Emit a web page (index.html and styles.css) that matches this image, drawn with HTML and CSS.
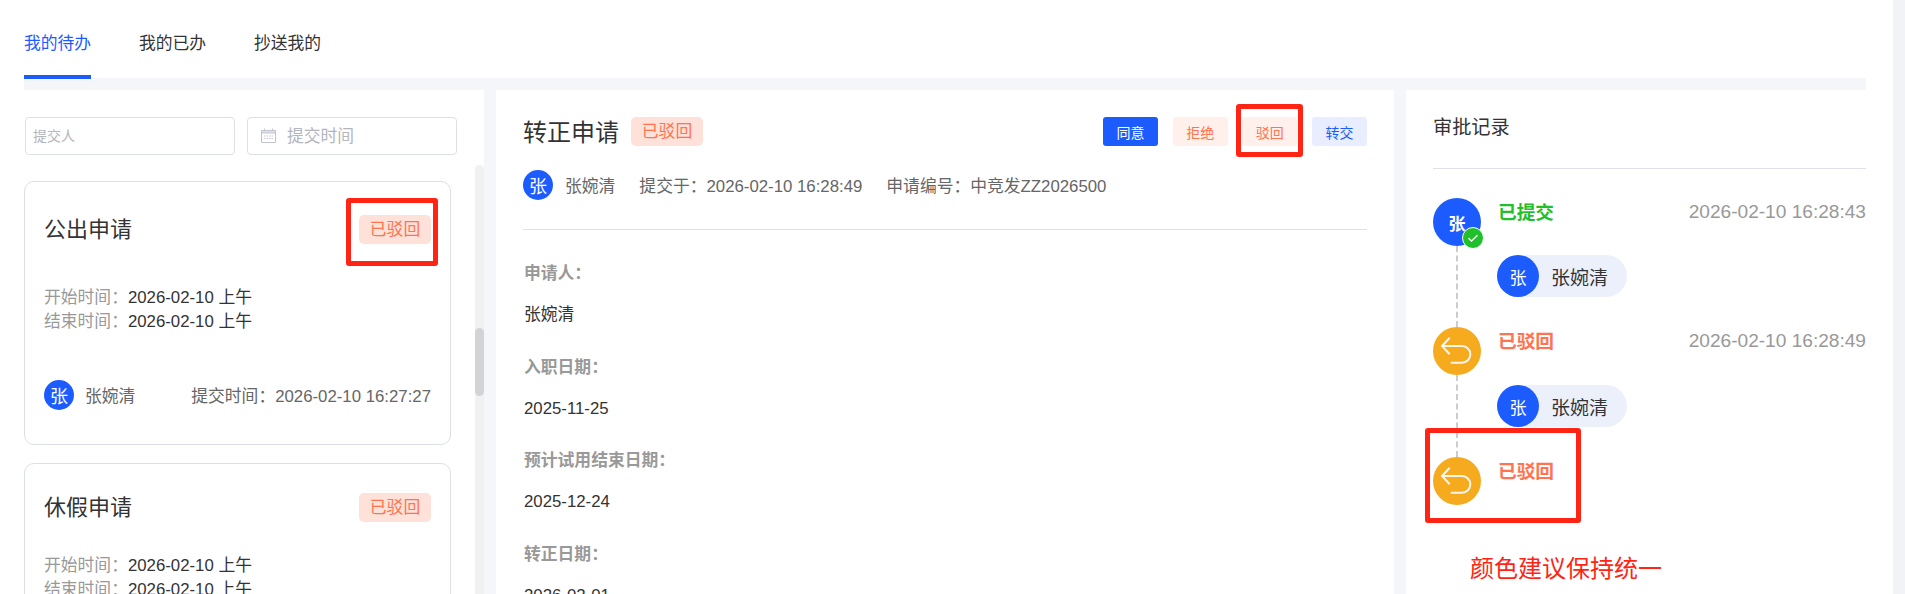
FILE: index.html
```html
<!DOCTYPE html>
<html lang="zh-CN">
<head>
<meta charset="utf-8">
<title>我的待办</title>
<link rel="stylesheet" href="styles.css">
</head>
<body>
<div class="page">
  <main class="main">
    <nav class="tabs">
      <a class="tab active">我的待办</a>
      <a class="tab">我的已办</a>
      <a class="tab">抄送我的</a>
    </nav>
    <div class="board">
      <section class="list-panel">
        <div class="filters">
          <div class="input small">提交人</div>
          <div class="input">
            <svg class="cal" viewBox="0 0 15 15" width="15" height="15"><path d="M.5 2.500h14v12H.5z" fill="none" stroke="#c0c4cc"/><path d="M.5 2.500h14v2.500H.5z" fill="#dfe1e6" stroke="#c0c4cc"/><path d="M3.500.5v2M11.500.5v2" stroke="#c0c4cc"/><path d="M3 7.500h1.500v1H3zM5.500 7.500H7v1H5.500zM8 7.500h1.500v1H8zM10.500 7.500H12v1h-1.500zM3 10h1.500v1H3zM5.500 10H7v1H5.500zM8 10h1.500v1H8zM10.500 10H12v1h-1.500z" fill="#c9ccd3"/></svg>
            <span>提交时间</span>
          </div>
        </div>
        <div class="scroll-row">
          <div class="cards">
            <article class="card">
              <div class="card-head"><h3>公出申请</h3><span class="tag">已驳回</span></div>
              <p class="line first"><span class="k">开始时间：</span>2026-02-10 上午</p>
              <p class="line"><span class="k">结束时间：</span>2026-02-10 上午</p>
              <div class="card-foot">
                <span class="avatar a30">张</span><span class="who">张婉清</span>
                <span class="submitted">提交时间：2026-02-10 16:27:27</span>
              </div>
            </article>
            <article class="card compact">
              <div class="card-head"><h3>休假申请</h3><span class="tag">已驳回</span></div>
              <p class="line first"><span class="k">开始时间：</span>2026-02-10 上午</p>
              <p class="line"><span class="k">结束时间：</span>2026-02-10 上午</p>
            </article>
          </div>
          <div class="scrollbar"><div class="thumb"></div></div>
        </div>
      </section>

      <section class="detail-panel">
        <div class="detail-head">
          <div class="title-row">
            <h2>转正申请</h2><span class="tag">已驳回</span>
            <div class="actions">
              <button class="btn primary">同意</button>
              <button class="btn danger">拒绝</button>
              <button class="btn danger">驳回</button>
              <button class="btn soft">转交</button>
            </div>
          </div>
          <div class="meta">
            <span class="avatar a30">张</span><span class="who">张婉清</span>
            <span class="meta-item">提交于：2026-02-10 16:28:49</span>
            <span class="meta-item">申请编号：中竞发ZZ2026500</span>
          </div>
        </div>
        <dl class="fields">
          <dt>申请人：</dt><dd>张婉清</dd>
          <dt>入职日期：</dt><dd>2025-11-25</dd>
          <dt>预计试用结束日期：</dt><dd>2025-12-24</dd>
          <dt>转正日期：</dt><dd>2026-02-01</dd>
        </dl>
      </section>

      <section class="record-panel">
        <h4>审批记录</h4>
        <div class="timeline">
          <div class="step">
            <div class="node blue">张
              <span class="check"><svg viewBox="0 0 12 12" width="12" height="12"><path d="M1.500 6.300 4.500 9 10.500 3.300" fill="none" stroke="#fff" stroke-width="1.500"/></svg></span>
            </div>
            <div class="step-body">
              <div class="step-top"><b class="green">已提交</b><time>2026-02-10 16:28:43</time></div>
              <div class="pill"><span class="avatar a42">张</span><span>张婉清</span></div>
            </div>
          </div>
          <div class="step">
            <div class="node amber">
              <svg viewBox="0 0 48 48" width="48" height="48"><path d="M16.700 10.700 9 19l7.700 8.300M9 19h20a8.350 8.350 0 0 1 0 16.700H17.700" fill="none" stroke="#fff" stroke-opacity=".9" stroke-width="2"/></svg>
            </div>
            <div class="step-body">
              <div class="step-top"><b class="orange">已驳回</b><time>2026-02-10 16:28:49</time></div>
              <div class="pill"><span class="avatar a42">张</span><span>张婉清</span></div>
            </div>
          </div>
          <div class="step last">
            <div class="node amber">
              <svg viewBox="0 0 48 48" width="48" height="48"><path d="M16.700 10.700 9 19l7.700 8.300M9 19h20a8.350 8.350 0 0 1 0 16.700H17.700" fill="none" stroke="#fff" stroke-opacity=".9" stroke-width="2"/></svg>
            </div>
            <div class="step-body">
              <div class="step-top"><b class="orange">已驳回</b></div>
            </div>
          </div>
        </div>
      </section>
    </div>
  </main>
  <div class="page-scroll"></div>
</div>
<div class="mark m1"></div>
<div class="mark m2"></div>
<div class="mark m3"></div>
<div class="note">颜色建议保持统一</div>
</body>
</html>
```
FILE: styles.css
```css
* { box-sizing: border-box; }
html, body { margin: 0; height: 594px; overflow: hidden; background: #fff; }
body {
  position: relative;
  font-family: "Liberation Sans", "Noto Sans CJK SC", sans-serif;
  color: #333;
  font-size: 16.800px;
}
.page { display: flex; height: 594px; }
.main { width: 1893px; padding-left: 24px; display: flex; flex-direction: column; overflow: hidden; }
.page-scroll { width: 12px; background: #f1f3f6; }
.tabs { display: flex; gap: 48px; height: 78px; flex: none; }
.tab { width: 67px; height: 79px; padding-top: 34px; font-size: 16.800px; line-height: 20px; color: #333; white-space: nowrap; position: relative; z-index: 1; }
.tab.active { color: #1c5cff; border-bottom: 4px solid #1c5cff; }
.board { display: flex; gap: 12px; padding-top: 12px; background: #f5f6fa; flex: 1; min-height: 0; width: 1842px; }
.list-panel { width: 460px; background: #fff; flex: none; display: flex; flex-direction: column; }
.filters { display: flex; gap: 12px; padding: 27px 0 0 1px; height: 75px; flex: none; }
.input { width: 210px; height: 38px; border: 1px solid #dcdfe6; border-radius: 4px; display: flex; align-items: center; color: #b3b6bd; font-size: 16.800px; padding: 0 0 2px 13px; gap: 11px; }
.input.small { font-size: 14px; padding-left: 7px; }
.cal { flex: none; }
.scroll-row { display: flex; flex: 1; min-height: 0; }
.cards { width: 451px; padding-top: 16px; overflow: hidden; flex: none; }
.card { width: 427px; margin-bottom: 18px; height: 264px; border: 1px solid #dcdfe6; border-radius: 10px; padding: 33px 19px 0; flex: none; }
.card.compact { padding-top: 29px; }
.card-head { display: flex; justify-content: space-between; align-items: center; height: 29px; }
h3 { margin: 0 0 6px; font-weight: 400; font-size: 22px; color: #333; }
.tag { display: inline-block; width: 72px; height: 29px; line-height: 29px; text-align: center; border-radius: 5px; background: #fee2da; color: #ff7350; font-size: 16.800px; }
.line { margin: 0; font-size: 16.800px; line-height: 24px; color: #333; }
.line.first { margin-top: 42px; }
.compact .line.first { margin-top: 32px; }
.k { color: #999; }
.card-foot { display: flex; align-items: center; margin-top: 46px; font-size: 16.800px; color: #666; }
.card-foot .who { margin-left: 11px; }
.avatar { display: inline-flex; align-items: center; justify-content: center; border-radius: 50%; background: #1c5cff; color: #fff; flex: none; }
.a30 { width: 30px; height: 30px; font-size: 18px; }
.a42 { width: 42px; height: 42px; font-size: 17px; }
.who { margin-left: 12px; color: #666; }
.submitted { margin-left: auto; }
.scrollbar { width: 9px; background: #f1f1f2; border-radius: 5px 5px 0 0; padding-top: 163px; }
.thumb { height: 68px; background: #d2d3d5; border-radius: 5px; }
.detail-panel { width: 898px; background: #fff; flex: none; padding: 0 27px; }
.detail-head { height: 140px; border-bottom: 1px solid #e0e1e8; }
.title-row { display: flex; align-items: center; padding-top: 27px; height: 56px; }
h2 { margin: 0 12px 2px 0; font-weight: 400; font-size: 24px; color: #333; }
.actions { margin-left: auto; display: flex; gap: 14.670px; }
.btn { width: 55px; height: 29px; padding: 0; border: 0; border-radius: 3px; font: 14px "Liberation Sans", "Noto Sans CJK SC", sans-serif; }
.primary { background: #1c5cff; color: #fff; }
.danger { background: #fff0eb; color: #ff7350; }
.soft { background: #e8eeff; color: #1c5cff; }
.meta { display: flex; align-items: center; margin-top: 24px; font-size: 16.800px; color: #666; }
.meta-item { margin-left: 24px; }
.fields { margin: 0; padding: 32px 1px 0; }
dt { font-weight: 700; font-size: 16.800px; line-height: 24px; color: #999; }
dd { margin: 17px 0 28.500px; font-size: 16.800px; line-height: 24px; color: #333; }
.record-panel { width: 460px; background: #fff; padding-left: 27px; flex: none; overflow: hidden; }
h4 { margin: 0; height: 79px; padding-top: 25px; border-bottom: 1px solid #e0e1e8; font-weight: 400; font-size: 19.200px; line-height: 26px; color: #333; }
.timeline { padding-top: 29px; }
.step { display: flex; height: 129px; position: relative; }
.step:nth-child(2) { height: 130px; }
.step:nth-child(2) .pill { margin-top: 30px; }
.step::before { content: ""; position: absolute; left: 23px; top: 48px; bottom: 0; border-left: 2px dashed #ccc; }
.step.last::before { display: none; }
.node { width: 48px; height: 48px; border-radius: 50%; color: #fff; font-weight: 700; font-size: 17px; display: flex; align-items: center; justify-content: center; position: relative; flex: none; z-index: 1; }
.blue { background: #1c5cff; }
.amber { background: #f6aa1e; }
.check { position: absolute; right: -3px; bottom: -3px; width: 22px; height: 22px; border-radius: 50%; background: #1fc02a; border: 1px solid #fff; display: flex; align-items: center; justify-content: center; }
.step-body { flex: 1; padding-left: 16px; }
.step-top { display: flex; justify-content: space-between; align-items: center; height: 28px; padding-left: 1px; }
b { font-size: 18.700px; margin-bottom: 4px; }
.green { color: #1fc02a; }
.orange { color: #ff7350; }
time { color: #999; font-size: 19.100px; }
.pill { display: inline-flex; align-items: center; margin-top: 29px; height: 42px; width: 130px; border-radius: 21px; background: #ecf0fb; font-size: 19px; color: #333; gap: 12px; }
.mark { position: absolute; border: 5px solid #ff2414; border-radius: 3px; }
.m1 { left: 346px; top: 198px; width: 92px; height: 68px; }
.m2 { left: 1236px; top: 104px; width: 67px; height: 53px; }
.m3 { left: 1425px; top: 428px; width: 156px; height: 95px; }
.note { position: absolute; left: 1470px; top: 553px; font-size: 24px; line-height: 32px; color: #ff2414; white-space: nowrap; }
```
